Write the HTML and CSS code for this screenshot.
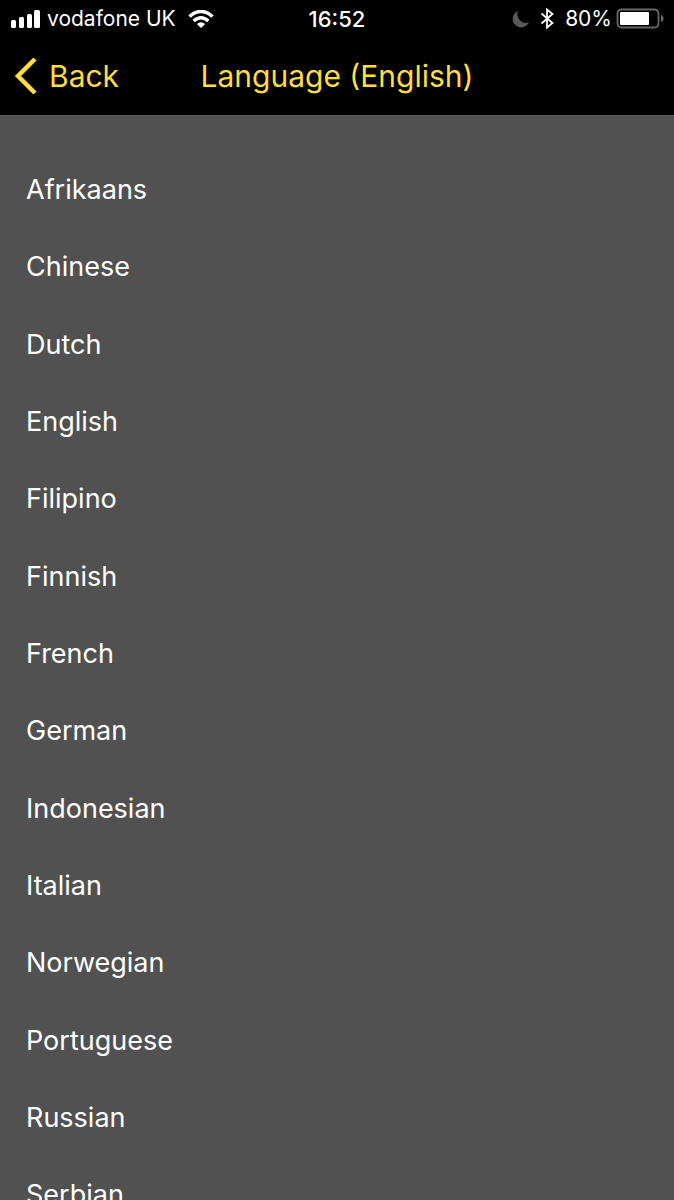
FILE: index.html
```html
<!DOCTYPE html>
<html lang="en">
<head>
    <meta charset="UTF-8">
    <meta name="viewport" content="width=device-width, initial-scale=1.0">
    <title>Language</title>
    <link rel="stylesheet" href="styles.css">
</head>
<body>
    <header class="header">
        <div class="status-bar">
            <div class="status-left">
                <svg class="signal" width="30" height="18" viewBox="0 0 30 18" fill="#fff" aria-hidden="true">
                    <rect x="1" y="10" width="5" height="8" rx="1.5"/>
                    <rect x="9" y="7" width="5" height="11" rx="1.5"/>
                    <rect x="17" y="4" width="5" height="14" rx="1.5"/>
                    <rect x="24" y="0" width="6" height="18" rx="1.5"/>
                </svg>
                <span class="carrier">vodafone UK</span>
                <svg class="wifi" width="26" height="18" viewBox="0 0 26 18" aria-hidden="true">
                    <path d="M1.5 6.5Q13-3.5 24.5 6.5" fill="none" stroke="#fff" stroke-width="3.6"/>
                    <path d="M5.7 11Q13 4.5 20.3 11" fill="none" stroke="#fff" stroke-width="3.4"/>
                    <path d="M8.8 14Q13 10.4 17.2 14L13 18Z" fill="#fff"/>
                </svg>
            </div>
            <time class="clock">16:52</time>
            <div class="status-right">
                <svg class="moon" width="18" height="18" viewBox="0 0 18 18" aria-hidden="true">
                    <path d="M6 1A8.5 8.5 0 1 0 17 12.2A8.5 8.5 0 0 1 6 1Z" fill="#59595b"/>
                </svg>
                <svg class="bluetooth" width="14" height="22" viewBox="0 0 14 22" aria-hidden="true">
                    <path d="M1.5 5.5L12.5 15L7 19.5V1.5L12.5 6L1.5 15.5" fill="none" stroke="#fff" stroke-width="1.8"/>
                </svg>
                <span class="percent">80%</span>
                <svg class="battery" width="48" height="22" viewBox="0 0 48 22" aria-hidden="true">
                    <rect x="1.5" y="1.5" width="41" height="18" rx="4" fill="none" stroke="#68686a" stroke-width="1.8"/>
                    <rect x="4" y="4" width="29" height="13" rx="1" fill="#fff"/>
                    <path d="M45 7Q47.5 7.5 47.5 10.5T45 14Z" fill="#68686a"/>
                </svg>
            </div>
        </div>
        <nav class="nav-bar">
            <button class="back" type="button">
                <svg width="23" height="38" viewBox="0 0 23 38" aria-hidden="true">
                    <path d="M21 2L4 19L21 36" fill="none" stroke="#fedd3f" stroke-width="4.5"/>
                </svg>
                Back
            </button>
            <h1>Language (English)</h1>
        </nav>
    </header>
    <main class="content">
        <ul class="languages">
            <li><button type="button">Afrikaans</button></li>
            <li><button type="button">Chinese</button></li>
            <li><button type="button">Dutch</button></li>
            <li><button type="button">English</button></li>
            <li><button type="button">Filipino</button></li>
            <li><button type="button">Finnish</button></li>
            <li><button type="button">French</button></li>
            <li><button type="button">German</button></li>
            <li><button type="button">Indonesian</button></li>
            <li><button type="button">Italian</button></li>
            <li><button type="button">Norwegian</button></li>
            <li><button type="button">Portuguese</button></li>
            <li><button type="button">Russian</button></li>
            <li><button type="button">Serbian</button></li>
        </ul>
    </main>
</body>
</html>
```
FILE: styles.css
```css
* {
    box-sizing: border-box;
}

body {
    display: flex;
    flex-direction: column;
    height: 100vh;
    margin: 0;
    font-family: Inter, "Liberation Sans", sans-serif;
    background-color: #515151;
    color: #fff;
}

button {
    padding: 0;
    border: none;
    background: none;
    color: inherit;
    font: inherit;
    cursor: pointer;
}

svg {
    display: block;
    flex: none;
}

.header {
    flex: none;
    background-color: #000;
}

.status-bar {
    display: grid;
    grid-template-columns: 1fr auto 1fr;
    align-items: center;
    height: 37px;
    padding: 0 10px;
    font-size: 21px;
    line-height: 36px;
}

.status-left,
.status-right {
    display: flex;
    align-items: center;
}

.status-right {
    justify-content: flex-end;
}

.carrier {
    margin: 0 12px 0 7px;
}

.clock {
    font-size: 22px;
    font-weight: 500;
}

.moon {
    margin-right: 10px;
}

.percent {
    margin: 0 4px 0 11px;
}

.nav-bar {
    display: grid;
    grid-template-columns: 1fr auto 1fr;
    align-items: center;
    height: 78px;
    padding: 0 14px;
    color: #fedd3f;
    font-size: 30px;
}

.back {
    display: flex;
    align-items: center;
    justify-self: start;
    gap: 12px;
}

.nav-bar h1 {
    margin: 0;
    font-size: 30px;
    font-weight: 400;
}

.content {
    flex: 1;
    min-height: 0;
    padding-top: 35px;
    border-top: 1px solid #5c5c5c;
    overflow-y: auto;
    scrollbar-width: none;
}

.languages {
    margin: 0;
    padding: 0;
    list-style: none;
    font-size: 27px;
}

.languages li {
    height: 77px;
}

.languages li:nth-child(3n) {
    height: 78px;
}

.languages button {
    width: 100%;
    height: 100%;
    padding: 0 26px;
    text-align: left;
}
```
